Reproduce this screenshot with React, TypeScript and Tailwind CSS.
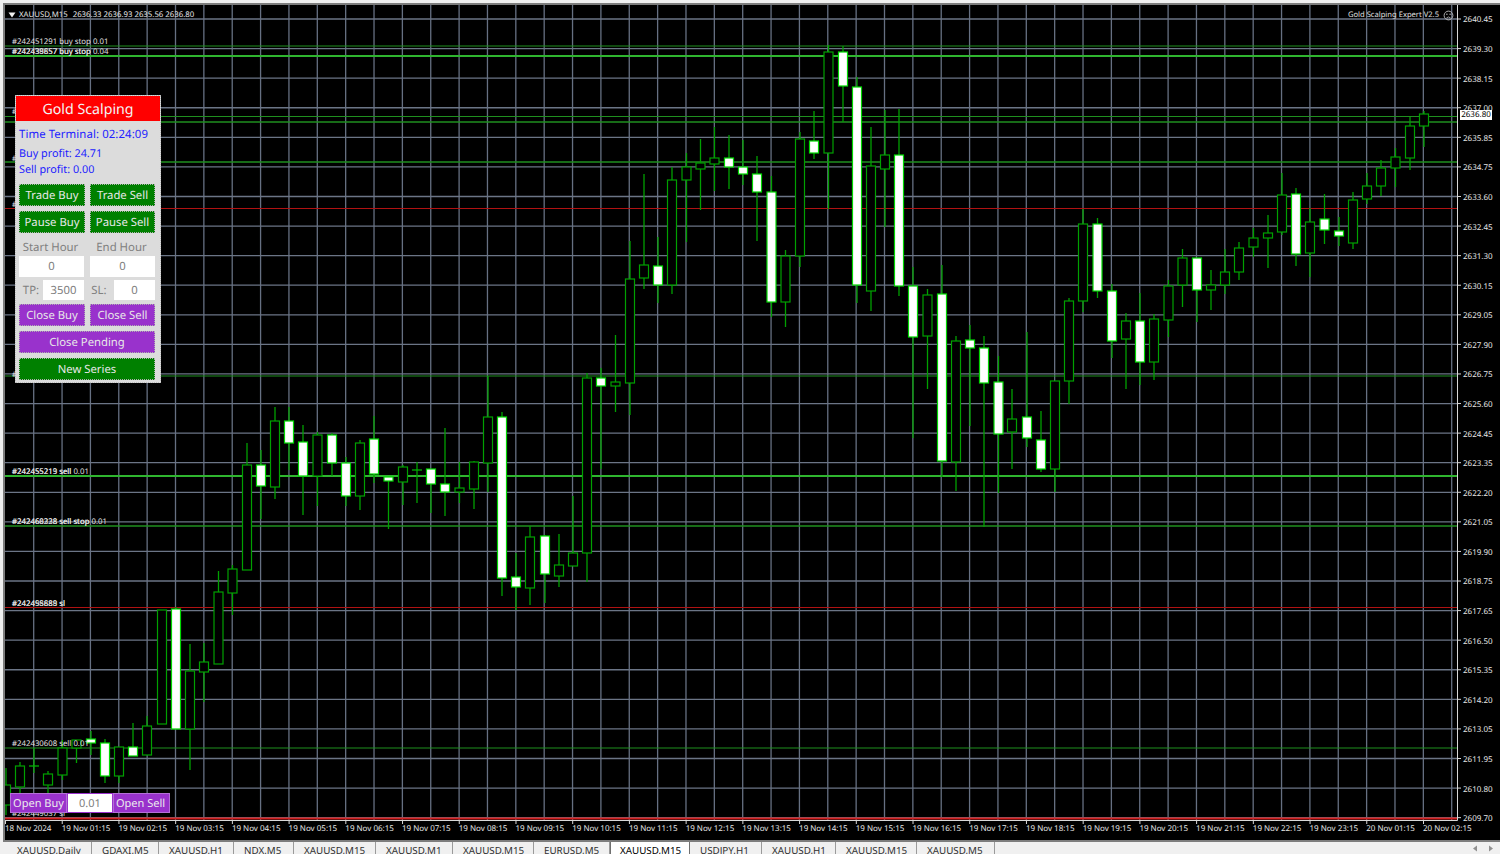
const CANDLES: [number, number, number, number, number, number][] = [
  [6, 768, 785, 805, 815, 0],
  [20, 762, 766, 787, 793, 0],
  [34, 748, 766, 766, 773, 0],
  [48, 771, 774, 785, 795, 0],
  [62.5, 740, 748, 775, 780, 0],
  [76.5, 740, 740, 748, 763, 0],
  [91, 731, 739, 743, 755, 1],
  [105, 739, 743, 776, 783, 1],
  [119, 747, 747, 776, 783, 0],
  [133, 723, 747, 756, 756, 1],
  [147, 716, 726, 755, 755, 0],
  [162, 610, 610, 724, 724, 0],
  [176, 607, 609, 729, 729, 1],
  [190, 644, 671, 729, 770, 0],
  [204, 643, 662, 672, 702, 0],
  [218.5, 571, 592, 664, 664, 0],
  [232.5, 565, 569, 593, 615, 0],
  [247, 443, 465, 570, 570, 0],
  [261, 450, 465, 486, 519, 1],
  [275, 407, 421, 487, 499, 0],
  [289, 407, 421, 443, 470, 1],
  [303, 425, 442, 476, 515, 1],
  [317.5, 432, 435, 476, 506, 0],
  [332, 433, 435, 463, 476, 1],
  [346, 457, 463, 496, 506, 1],
  [360, 440, 443, 496, 510, 0],
  [374, 416, 439, 474, 483, 1],
  [388.5, 477, 477, 481, 529, 1],
  [403, 465, 467, 482, 505, 0],
  [417, 462, 470, 470, 503, 0],
  [431, 469, 469, 484, 513, 1],
  [445, 428, 484, 492, 516, 1],
  [459.5, 462, 488, 492, 503, 0],
  [474, 461, 462, 489, 509, 0],
  [488, 376, 417, 463, 492, 0],
  [502, 412, 417, 578, 596, 1],
  [516, 553, 577, 587, 610, 1],
  [530, 526, 537, 588, 605, 0],
  [545, 535, 536, 574, 603, 1],
  [559, 534, 565, 576, 587, 0],
  [573, 496, 553, 566, 566, 0],
  [587, 373, 378, 553, 582, 0],
  [601, 368, 378, 386, 469, 1],
  [615.5, 335, 382, 386, 412, 0],
  [630, 241, 279, 383, 415, 0],
  [644, 174, 265, 278, 289, 0],
  [658, 237, 266, 285, 303, 1],
  [672, 167, 180, 285, 294, 0],
  [686.5, 153, 167, 180, 242, 0],
  [700.5, 139, 163, 169, 210, 0],
  [714.5, 127, 158, 164, 191, 0],
  [729, 135, 158, 167, 189, 1],
  [743, 140, 167, 174, 185, 1],
  [757, 156, 174, 192, 241, 1],
  [771.5, 176, 192, 302, 317, 1],
  [785.5, 250, 256, 302, 327, 0],
  [800, 132, 139, 256, 267, 0],
  [814, 111, 141, 153, 159, 1],
  [828.5, 45, 52, 153, 209, 0],
  [843, 46, 52, 86, 122, 1],
  [857, 77, 87, 285, 303, 1],
  [871, 127, 166, 291, 311, 0],
  [885, 110, 155, 169, 227, 0],
  [899, 109, 155, 286, 296, 1],
  [913, 267, 286, 337, 438, 1],
  [927.5, 289, 295, 336, 389, 0],
  [942, 265, 294, 461, 477, 1],
  [956, 336, 341, 462, 491, 0],
  [970, 325, 340, 348, 426, 1],
  [984, 336, 348, 383, 527, 1],
  [998.5, 356, 382, 434, 493, 1],
  [1012, 389, 419, 432, 469, 0],
  [1027, 332, 417, 438, 447, 1],
  [1041, 411, 440, 469, 472, 1],
  [1055, 381, 381, 469, 492, 0],
  [1069, 298, 301, 381, 404, 0],
  [1083, 209, 224, 301, 312, 0],
  [1097.5, 218, 224, 291, 298, 1],
  [1112, 284, 291, 341, 358, 1],
  [1126, 313, 321, 339, 389, 0],
  [1140, 293, 321, 362, 385, 1],
  [1154, 314, 319, 362, 380, 0],
  [1168.5, 280, 286, 320, 337, 0],
  [1182.5, 249, 258, 285, 307, 0],
  [1197, 258, 258, 290, 322, 1],
  [1211, 270, 285, 290, 310, 0],
  [1225, 249, 272, 285, 294, 0],
  [1239, 242, 248, 272, 280, 0],
  [1253.5, 228, 238, 247, 257, 0],
  [1268, 215, 233, 238, 268, 0],
  [1282, 173, 195, 232, 235, 0],
  [1296, 188, 194, 254, 266, 1],
  [1310, 208, 222, 253, 277, 0],
  [1324.5, 194, 219, 230, 244, 1],
  [1339, 217, 231, 236, 246, 1],
  [1353, 192, 200, 243, 249, 0],
  [1367, 173, 186, 199, 204, 0],
  [1381, 160, 168, 186, 196, 0],
  [1395.5, 148, 157, 168, 187, 0],
  [1410, 117, 126, 158, 170, 0],
  [1424, 111, 114, 126, 147, 0],
]

const PRICES = [
  '2640.45', '2639.30', '2638.15', '2637.00', '2635.85', '2634.75', '2633.60',
  '2632.45', '2631.30', '2630.15', '2629.05', '2627.90', '2626.75', '2625.60',
  '2624.45', '2623.35', '2622.20', '2621.05', '2619.90', '2618.75', '2617.65',
  '2616.50', '2615.35', '2614.20', '2613.05', '2611.95', '2610.80', '2609.70',
]

const HOURS = [
  '01:15', '02:15', '03:15', '04:15', '05:15', '06:15', '07:15', '08:15',
  '09:15', '10:15', '11:15', '12:15', '13:15', '14:15', '15:15', '16:15',
  '17:15', '18:15', '19:15', '20:15', '21:15', '22:15', '23:15',
]
const DATES = ['18 Nov 2024', ...HOURS.map((h) => `19 Nov ${h}`), '20 Nov 01:15', '20 Nov 02:15']

const LEVELS: [number, string, number][] = [
  [46, '#1f8f1f', 1.2],
  [56, '#2fb52f', 2],
  [116.5, '#1f8f1f', 1.2],
  [122, '#1f8f1f', 1.5],
  [162, '#1f8f1f', 1.5],
  [208.5, '#b01212', 1.2],
  [376, '#1f8f1f', 1.2],
  [476, '#2fb52f', 2],
  [526, '#1f8f1f', 1.4],
  [607.5, '#b01212', 1.2],
  [748, '#1f8f1f', 1.2],
  [818.5, '#d42020', 2],
]

const ORDER_LABELS = [
  { cls: 'top-[32px]', text: '#242451291 buy stop 0.01' },
  { cls: 'top-[42px]', text: '#242439857 buy stop 0.04' },
  { cls: 'top-[42px]', text: '#242438657 buy stop' },
  { cls: 'top-[102px]', text: '#242451291 sl' },
  { cls: 'top-[149px]', text: '#242451292 sl' },
  { cls: 'top-[195px]', text: '#242451293 sl' },
  { cls: 'top-[365px]', text: '#242451294 sl' },
  { cls: 'top-[462px]', text: '#242455219 sell 0.01' },
  { cls: 'top-[462px]', text: '#242455213 sell' },
  { cls: 'top-[512px]', text: '#242468228 sell stop 0.01' },
  { cls: 'top-[512px]', text: '#242460338 sell stop' },
  { cls: 'top-[594px]', text: '#242498888 sl' },
  { cls: 'top-[594px]', text: '#242455689 sl' },
  { cls: 'top-[734px]', text: '#242430608 sell 0.01' },
  { cls: 'top-[804px]', text: '#242449037 sl' },
]

const TABS = [
  { name: 'XAUUSD,Daily', cls: 'w-[85px]' },
  { name: 'GDAXI,M5', cls: 'w-[67px]' },
  { name: 'XAUUSD,H1', cls: 'w-[75px]' },
  { name: 'NDX,M5', cls: 'w-[60px]' },
  { name: 'XAUUSD,M15', cls: 'w-[82px]' },
  { name: 'XAUUSD,M1', cls: 'w-[77px]' },
  { name: 'XAUUSD,M15', cls: 'w-[81px]' },
  { name: 'EURUSD,M5', cls: 'w-[76px]' },
  { name: 'XAUUSD,M15', cls: 'w-[80px]', active: true },
  { name: 'USDJPY,H1', cls: 'w-[72px]' },
  { name: 'XAUUSD,H1', cls: 'w-[74px]' },
  { name: 'XAUUSD,M15', cls: 'w-[81px]' },
  { name: 'XAUUSD,M5', cls: 'w-[78px]' },
]

const FONT = "font-['Noto_Sans',sans-serif] [text-rendering:geometricPrecision]"

const PanelButton = ({ label, className }: { label: string; className: string }) => (
  <div className={`flex items-center justify-center whitespace-nowrap border border-dotted border-[#b0b0b0] pt-[2px] text-[11.3px] text-[#e8e8e8] ${className}`}>
    {label}
  </div>
)

const Field = ({ value, className }: { value: string; className: string }) => (
  <div className={`flex items-center justify-center bg-white pt-[2px] text-[11.3px] text-[#808080] ${className}`}>{value}</div>
)

const ChartSvg = () => {
  const verticals = Array.from({ length: 51 }, (_, k) => 33.7 + 28.36 * k)
  const horizontals = PRICES.map((_, k) => 19 + 29.58 * k)
  const dateTicks = Array.from({ length: 26 }, (_, k) => 5.5 + 56.72 * k)

  return (
    <svg width={1457} height={820} viewBox="5 5 1457 820" className="block shrink-0">
      {verticals.map((x) => (
        <line key={x} x1={x} x2={x} y1={5} y2={820} stroke="#667082" strokeWidth={1.3} />
      ))}
      {horizontals.map((y) => (
        <line key={y} x1={5} x2={1457} y1={y} y2={y} stroke="#6b7586" strokeWidth={1.3} />
      ))}
      {LEVELS.map(([y, color, width]) => (
        <line key={y} x1={5} x2={1457} y1={y} y2={y} stroke={color} strokeWidth={width} />
      ))}
      {CANDLES.map(([x, high, top, bottom, low, white]) => (
        <g key={x}>
          <line x1={x} x2={x} y1={high} y2={low} stroke="#00a000" strokeWidth={1.3} />
          {top === bottom ? (
            <line x1={x - 5} x2={x + 5} y1={top} y2={top} stroke="#00b000" strokeWidth={1.3} />
          ) : (
            <rect
              x={x - 4.5}
              y={top}
              width={9}
              height={bottom - top}
              fill={white ? '#ffffff' : '#000000'}
              stroke={white ? '#00d800' : '#00a000'}
              strokeWidth={1.2}
            />
          )}
        </g>
      ))}
      <polyline points="1457.5,5 1457.5,820.5 5,820.5" fill="none" stroke="#d8d8d8" strokeWidth={1} />
      {horizontals.map((y) => (
        <line key={`t${y}`} x1={1457} x2={1461} y1={y} y2={y} stroke="#d8d8d8" strokeWidth={1} />
      ))}
      {dateTicks.map((x) => (
        <line key={x} x1={x} x2={x} y1={820} y2={824} stroke="#d8d8d8" strokeWidth={1} />
      ))}
    </svg>
  )
}

const GoldPanel = () => (
  <div className="absolute left-[10px] top-[90px] flex h-[288px] w-[146px] flex-col border border-dotted border-[#bdbdbd] bg-[#dcdcdc]">
    <div className="flex h-[25px] items-center justify-center bg-[#ff0000] pt-[2px] text-[14.2px] text-[#f4f4f4]">Gold Scalping</div>
    <div className="flex flex-col px-[3px] text-[11.4px] text-[#2222ff]">
      <div className="mt-[3px] flex h-[20px] items-center whitespace-nowrap pt-[2px] tracking-[0.08px]">Time Terminal: 02:24:09</div>
      <div className="mt-px flex h-[17px] items-center pt-[2px] text-[10.8px]">Buy profit: 24.71</div>
      <div className="flex h-[15px] items-center pt-[2px] text-[10.8px]">Sell profit: 0.00</div>
      <div className="mt-[7px] flex gap-[5px]">
        <PanelButton label="Trade Buy" className="h-[22px] w-[66px] bg-[#008000]" />
        <PanelButton label="Trade Sell" className="h-[22px] w-[65px] bg-[#008000]" />
      </div>
      <div className="mt-[5px] flex gap-[5px]">
        <PanelButton label="Pause Buy" className="h-[22px] w-[66px] bg-[#008000]" />
        <PanelButton label="Pause Sell" className="h-[22px] w-[65px] bg-[#008000]" />
      </div>
      <div className="mt-[5px] flex h-[18px] items-center pt-[1px] text-[#808080]">
        <div className="w-[63px] text-center">Start Hour</div>
        <div className="ml-[8px] w-[63px] text-center">End Hour</div>
      </div>
      <div className="flex gap-[6px]">
        <Field value="0" className="h-[21px] w-[65px]" />
        <Field value="0" className="h-[21px] w-[65px]" />
      </div>
      <div className="mt-[3px] flex h-[20px] items-center text-[#808080]">
        <div className="w-[24px] pt-[2px] text-center">TP:</div>
        <Field value="3500" className="h-[20px] w-[41px]" />
        <div className="w-[30px] pt-[2px] text-center">SL:</div>
        <Field value="0" className="h-[20px] w-[41px]" />
      </div>
      <div className="mt-[4px] flex gap-[5px]">
        <PanelButton label="Close Buy" className="h-[22px] w-[66px] bg-[#9932cc]" />
        <PanelButton label="Close Sell" className="h-[22px] w-[65px] bg-[#9932cc]" />
      </div>
      <PanelButton label="Close Pending" className="mt-[5px] h-[22px] w-[136px] bg-[#9932cc]" />
      <PanelButton label="New Series" className="mt-[5px] h-[22px] w-[136px] bg-[#008000]" />
    </div>
  </div>
)

const App = () => {
  return (
    <div className={`flex h-[854px] w-[1500px] flex-col overflow-hidden bg-[#f0f0f0] ${FONT}`}>
      <div className="h-[3px] shrink-0 bg-[#f0f0f0]" />
      <div className="flex h-[839px] shrink-0 pl-[3px]">
        <div className="h-full w-full border-l-2 border-t-2 border-b-2 border-[#7d7d7d]">
          <div className="relative h-full w-full overflow-hidden bg-black">
            <div className="flex h-[820px]">
              <ChartSvg />
              <div className="mt-[0.7px] flex h-[828px] flex-col pl-[1px]">
                {PRICES.map((p) => (
                  <div key={p} className="flex h-[29.58px] shrink-0 items-center text-[8px] text-[#e6e6e6]">{p}</div>
                ))}
              </div>
            </div>
            <div className="mt-[-1px] flex h-[10px] items-center whitespace-nowrap text-[8px] text-[#e6e6e6]">
              {DATES.map((d) => (
                <div key={d} className="w-[56.72px] shrink-0">{d}</div>
              ))}
            </div>

            {ORDER_LABELS.map((l) => (
              <div key={l.text} className={`absolute left-[7px] whitespace-nowrap text-[7.8px] leading-[11px] text-[#e0e0e0] ${l.cls}`}>
                {l.text}
              </div>
            ))}

            <div className="absolute left-[3px] top-[5px] flex h-[10px] items-center text-[7.8px] whitespace-nowrap text-[#e6e6e6]">
              <svg width="8" height="6" viewBox="0 0 8 6" className="mr-[3px]">
                <path d="M0.5 0.5 H7.5 L4 5.5 Z" fill="#f0f0f0" />
              </svg>
              <span className="pt-[1px]">XAUUSD,M15</span>
              <span className="ml-[5px] pt-[1px]">2636.33 2636.93 2635.56 2636.80</span>
            </div>

            <div className="absolute right-[46px] top-[5px] flex h-[10px] items-center whitespace-nowrap text-[7.6px] text-[#e0e0e0]">
              <span className="pt-[2px]">Gold Scalping Expert V2.5</span>
              <svg width="11" height="11" viewBox="0 0 11 11" className="ml-[4px]">
                <circle cx="5.5" cy="5.5" r="4.4" fill="none" stroke="#bdbdbd" strokeWidth="0.9" />
                <circle cx="3.9" cy="4.2" r="0.7" fill="#bdbdbd" />
                <circle cx="7.1" cy="4.2" r="0.7" fill="#bdbdbd" />
                <path d="M3.4 8 Q5.5 5.9 7.6 8" fill="none" stroke="#bdbdbd" strokeWidth="0.8" />
              </svg>
            </div>

            <div className="absolute left-[1455px] top-[105px] flex h-[10px] w-[32px] items-center justify-center bg-white text-[8px] text-black">
              2636.80
            </div>

            <GoldPanel />

            <div className="absolute left-[5px] top-[788px] flex h-[20px] items-stretch whitespace-nowrap text-[11px]">
              <div className="flex w-[57px] items-center justify-center border border-[#b46fd6] bg-[#9932cc] pt-[2px] text-[#ececec]">Open Buy</div>
              <div className="flex w-[46px] items-center justify-center border border-[#9932cc] bg-white pt-[2px] text-[#808080]">0.01</div>
              <div className="flex w-[57px] items-center justify-center border border-[#b46fd6] bg-[#9932cc] pr-[2px] pt-[2px] text-[#ececec]">Open Sell</div>
            </div>
          </div>
        </div>
      </div>
      <div className="relative flex h-[12px] shrink-0 overflow-hidden pl-[7px] text-[9.8px] text-[#303030]">
        {TABS.map((t, i) => (
          <div
            key={i}
            className={`flex h-[20px] shrink-0 items-start pt-[2px] ${t.cls} ${t.active ? 'border-x border-[#707070] bg-white pl-[9px] text-black' : 'border-r border-[#9a9a9a] pl-[10px]'}`}
          >
            {t.name}
          </div>
        ))}
        <div className="absolute right-[6px] top-[3px] flex gap-[10px]">
          <svg width="6" height="7" viewBox="0 0 6 7"><path d="M5 0.5 V6.5 L1 3.5 Z" fill="#909090" /></svg>
          <svg width="6" height="7" viewBox="0 0 6 7"><path d="M1 0.5 V6.5 L5 3.5 Z" fill="#909090" /></svg>
        </div>
      </div>
    </div>
  )
}

export default App
